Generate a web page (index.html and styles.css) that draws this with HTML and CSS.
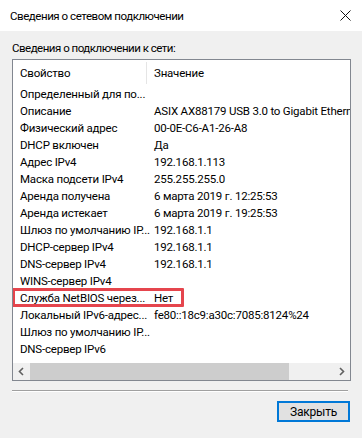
FILE: index.html
```html
<!DOCTYPE html>
<html lang="ru">
<head>
    <meta charset="UTF-8">
    <meta name="viewport" content="width=device-width, initial-scale=1.0">
    <title>Сведения о сетевом подключении</title>
    <link rel="stylesheet" href="styles.css">
</head>
<body>
    <div class="window">
        <div class="titlebar">
            <span class="title">Сведения о сетевом подключении</span>
            <svg class="close" width="11" height="11" viewBox="0 0 11 11">
                <path d="M0.5 0.5 L10.5 10.5 M10.5 0.5 L0.5 10.5" stroke="#111" stroke-width="1" fill="none"/>
            </svg>
        </div>

        <div class="content">
            <div class="label">Сведения о подключении к сети:</div>

            <div class="listview">
                <div class="list-header">
                    <div class="col col-prop">Свойство</div>
                    <div class="col col-val">Значение</div>
                </div>
                <div class="list-body">
                    <div class="row"><div class="col col-prop">Определенный для по...</div><div class="col col-val"></div></div>
                    <div class="row"><div class="col col-prop">Описание</div><div class="col col-val">ASIX AX88179 USB 3.0 to Gigabit Ethern</div></div>
                    <div class="row"><div class="col col-prop">Физический адрес</div><div class="col col-val">00-0E-C6-A1-26-A8</div></div>
                    <div class="row"><div class="col col-prop">DHCP включен</div><div class="col col-val">Да</div></div>
                    <div class="row"><div class="col col-prop">Адрес IPv4</div><div class="col col-val">192.168.1.113</div></div>
                    <div class="row"><div class="col col-prop">Маска подсети IPv4</div><div class="col col-val">255.255.255.0</div></div>
                    <div class="row"><div class="col col-prop">Аренда получена</div><div class="col col-val">6 марта 2019 г. 12:25:53</div></div>
                    <div class="row"><div class="col col-prop">Аренда истекает</div><div class="col col-val">6 марта 2019 г. 19:25:53</div></div>
                    <div class="row"><div class="col col-prop">Шлюз по умолчанию IP...</div><div class="col col-val">192.168.1.1</div></div>
                    <div class="row"><div class="col col-prop">DHCP-сервер IPv4</div><div class="col col-val">192.168.1.1</div></div>
                    <div class="row"><div class="col col-prop">DNS-сервер IPv4</div><div class="col col-val">192.168.1.1</div></div>
                    <div class="row"><div class="col col-prop">WINS-сервер IPv4</div><div class="col col-val"></div></div>
                    <div class="row marked"><div class="col col-prop">Служба NetBIOS через...</div><div class="col col-val">Нет</div></div>
                    <div class="row"><div class="col col-prop">Локальный IPv6-адрес...</div><div class="col col-val">fe80::18c9:a30c:7085:8124%24</div></div>
                    <div class="row"><div class="col col-prop">Шлюз по умолчанию IP...</div><div class="col col-val"></div></div>
                    <div class="row"><div class="col col-prop">DNS-сервер IPv6</div><div class="col col-val"></div></div>
                </div>
                <div class="hscroll">
                    <svg class="arrow" width="17" height="17" viewBox="0 0 17 17">
                        <path d="M10 5 L6.5 8.5 L10 12" stroke="#606060" stroke-width="1.6" fill="none"/>
                    </svg>
                    <div class="track"><div class="thumb"></div></div>
                    <svg class="arrow" width="17" height="17" viewBox="0 0 17 17">
                        <path d="M7 5 L10.5 8.5 L7 12" stroke="#606060" stroke-width="1.6" fill="none"/>
                    </svg>
                </div>
            </div>

            <div class="separator"></div>

            <div class="buttons">
                <button class="btn-close">Закрыть</button>
            </div>
        </div>
    </div>
</body>
</html>
```

FILE: styles.css
```css
body {
    margin: 0;
    padding: 0;
    font-family: Roboto, "Liberation Sans", Arial, sans-serif;
    font-size: 11.5px;
    letter-spacing: -0.2px;
    color: #000;
    background-color: #f0f0f0;
}
.window {
    width: 362px;
    height: 438px;
    display: flex;
    flex-direction: column;
}
.titlebar {
    height: 31px;
    background-color: #fff;
    display: flex;
    align-items: center;
    justify-content: space-between;
    padding: 0 11px 0 10px;
    flex-shrink: 0;
}
.title {
    font-size: 11.5px;
    letter-spacing: -0.45px;
}
.close {
    display: block;
}
.content {
    flex: 1;
    padding: 9px 11px 0 12px;
    display: flex;
    flex-direction: column;
}
.label {
    line-height: 16px;
    height: 16px;
    letter-spacing: -0.5px;
}
.listview {
    margin-top: 3px;
    height: 322px;
    box-sizing: border-box;
    border: 1px solid #828790;
    background-color: #fff;
    display: flex;
    flex-direction: column;
    overflow: hidden;
}
.list-header {
    height: 26px;
    display: flex;
    align-items: center;
    flex-shrink: 0;
}
.list-header .col-prop {
    border-right: 1px solid #e5e5e5;
    height: 22px;
    line-height: 22px;
    box-sizing: border-box;
}
.list-body {
    flex: 1;
}
.row {
    height: 17px;
    line-height: 17px;
    display: flex;
    position: relative;
}
.col {
    white-space: nowrap;
}
.col-prop {
    width: 134px;
    padding-left: 7px;
    box-sizing: border-box;
    flex-shrink: 0;
}
.col-val {
    padding-left: 7px;
    flex: 1;
}
.row.marked::after {
    content: "";
    position: absolute;
    left: -1px;
    top: -2px;
    width: 172px;
    height: 19px;
    box-sizing: border-box;
    border: 3px solid #e5454d;
    border-radius: 1px;
}
.hscroll {
    height: 17px;
    display: flex;
    background-color: #f0f0f0;
    flex-shrink: 0;
}
.arrow {
    display: block;
    flex-shrink: 0;
}
.track {
    flex: 1;
    display: flex;
    align-items: stretch;
}
.thumb {
    width: 259px;
    background-color: #cdcdcd;
}
.separator {
    margin-top: 9px;
    height: 0;
    border-top: 1px solid #a0a0a0;
    border-bottom: 1px solid #fff;
    margin-right: 3px;
}
.buttons {
    display: flex;
    justify-content: flex-end;
    margin-top: 9px;
}
.btn-close {
    width: 73px;
    height: 21px;
    font-family: Roboto, "Liberation Sans", Arial, sans-serif;
    font-size: 12px;
    letter-spacing: -0.2px;
    color: #000;
    background-color: #e1e1e1;
    border: 2px solid #0078d7;
    padding: 0;
    margin-right: 1px;
}
```
